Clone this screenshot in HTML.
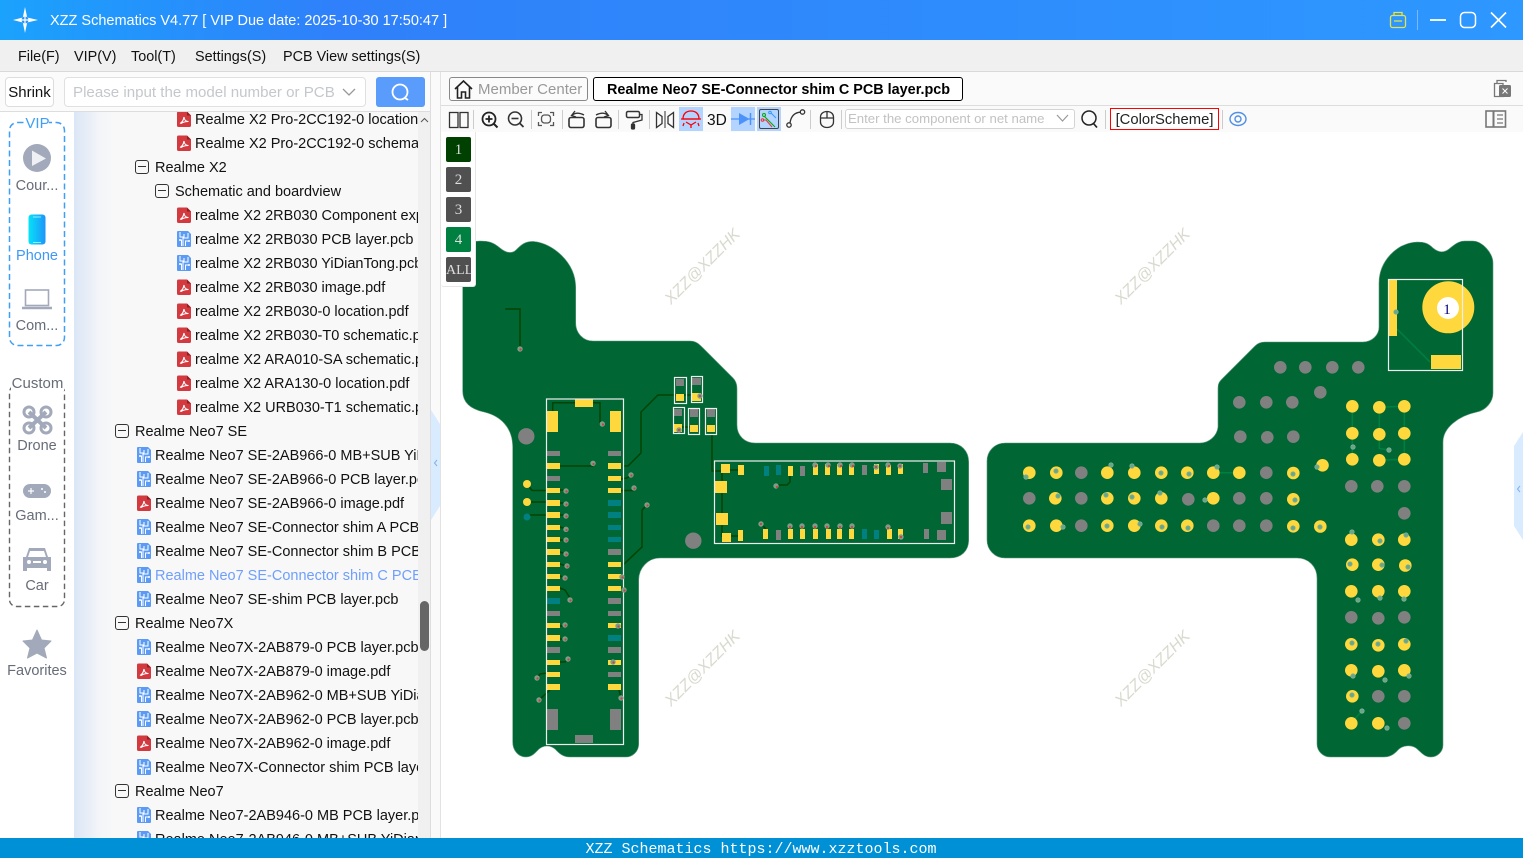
<!DOCTYPE html>
<html><head><meta charset="utf-8"><title>XZZ Schematics</title>
<style>
*{box-sizing:border-box}
html,body{margin:0;padding:0;width:1523px;height:858px;overflow:hidden;background:#fff;font-family:"Liberation Sans","Noto Sans CJK SC",sans-serif;color:#111}
.a{position:absolute}
#title{left:0;top:0;width:1523px;height:40px;background:linear-gradient(90deg,#1ba2fd 0,#2f80fa 22%,#2f88fb 50%,#2d98ff 100%);color:#fff;font-size:14.5px;line-height:42px;padding-left:50px;white-space:nowrap}
#menu{left:0;top:40px;width:1523px;height:32px;background:#f0f0f0;border-bottom:1px solid #d9d9d9;font-size:14.4px;line-height:35px}
#menu span{position:absolute;top:0;white-space:nowrap}
#sb{left:0;top:72px;width:431px;height:40px;background:#fbfbfb;border-bottom:1px solid #ddd}
#shrink{left:5px;top:5px;width:49px;height:30px;border:1px solid #ddd;border-radius:4px;background:#fff;font-size:15px;line-height:30px;text-align:center}
#inp{left:64px;top:5px;width:302px;height:30px;border:1px solid #e0e0e0;border-radius:4px;background:#fff;color:#c4c7cc;font-size:15.1px;line-height:30px;padding-left:8px;white-space:nowrap}
#btn{left:376px;top:5px;width:49px;height:30px;background:#5a9cfb;border-radius:3px}
#side{left:0;top:112px;width:74px;height:726px;background:#fff}
.sl{position:absolute;left:0;width:74px;text-align:center;font-size:14.5px;color:#666c78;white-space:nowrap;line-height:18px}
#tree{left:74px;top:112px;width:344px;height:726px;overflow:hidden;background:linear-gradient(90deg,#dbe6f6 0,#f3f5f8 26px,#f8f8f8 40px);font-size:14.5px}
#tree .in{margin-top:-5px}
.r{position:relative;height:24px;line-height:26px;white-space:nowrap}
.r svg{position:absolute;top:4px;width:14px;height:16px}
.r b{position:absolute;top:5px;width:14px;height:14px;border:1.2px solid #333;border-radius:3px;font-weight:normal}
.r b:after{content:"";position:absolute;left:2px;right:2px;top:5px;height:1.2px;background:#333}
.l3{padding-left:121px}.l3 svg{left:103px}
.l2{padding-left:81px}.l2 svg{left:63px}
.g1{padding-left:61px}.g1 b{left:41px}
.g2{padding-left:81px}.g2 b{left:61px}
.g3{padding-left:101px}.g3 b{left:81px}
#track{left:418px;top:112px;width:13px;height:726px;background:#f0f0f0}
#thumb{left:420px;top:601px;width:9px;height:50px;background:#666;border-radius:5px}
#vl1{left:430px;top:72px;width:1px;height:766px;background:#ddd}
#gut{left:431px;top:72px;width:9px;height:766px;background:#fafafa}
#vl2{left:440px;top:72px;width:1px;height:766px;background:#e2e2e2}
#tabs{left:441px;top:72px;width:1082px;height:34px;background:#fafafa;border-bottom:1px solid #ddd}
#mc{left:449px;top:77px;width:139px;height:24px;border:1px solid #888;border-radius:3px;background:#fbfbfb;color:#999;font-size:15px;line-height:24px;padding-left:28px;white-space:nowrap}
#tab{left:593px;top:77px;width:370px;height:24px;border:1px solid #000;border-radius:3px;background:#fff;color:#000;font-weight:bold;font-size:14.4px;line-height:24px;padding-left:13px;white-space:nowrap}
#tools{left:441px;top:106px;width:1082px;height:26px;background:#fafafa}
#cinp{left:845px;top:109px;width:230px;height:20px;border:1px solid #d4d4d4;border-radius:3px;background:#fff;color:#c2c2c2;font-size:13.2px;line-height:18px;padding-left:2px;white-space:nowrap;overflow:hidden}
#cs{left:1110px;top:108px;width:109px;height:22px;border:1px solid #f00;color:#222;background:#fff;font-size:14.8px;line-height:23px;text-align:center;white-space:nowrap}
#t3d{left:707px;top:111px;font-size:15.5px;line-height:20px;color:#111}
#layers{left:441px;top:132px;width:35px;height:155px;background:#fff;border-right:1px solid #e6e6e6;border-bottom:1px solid #e6e6e6;border-radius:0 0 3px 3px;z-index:3}
.lb{position:absolute;left:5px;width:25px;height:25px;border-radius:2px;color:#ddd;font:15px/27px "Liberation Serif",serif;text-align:center;overflow:hidden}
#wm text{font:italic 16px "Liberation Sans",sans-serif;fill:#d9d9cf}
#foot{left:0;top:838px;width:1523px;height:20px;background:#0090d6;color:#fff;font:normal 15px/24px "Liberation Mono",monospace;text-align:center;padding-right:1px;white-space:nowrap;z-index:5;overflow:hidden}
.y{fill:#ffd83d}.g{fill:#808080}.t{fill:#008080}
.v circle{fill:#7f9c8b}
.vr{fill:#c8453b}
.w{fill:none;stroke:#eee;stroke-width:1.2}
.tr{fill:none;stroke:#024402;stroke-width:1.5}
.tg{fill:none;stroke:#008040;stroke-width:1.5}
.q{fill:#6aa588;stroke:#7ab296;stroke-width:.8}
</style></head><body>

<svg width="0" height="0" style="position:absolute"><defs>
<symbol id="pdf" viewBox="0 0 14 16"><path d="M1.5 .5H10L14 4.5V14.500a1.500 1.500 0 0 1-1.500 1.500H1.500A1.500 1.500 0 0 1 0 14.500V2A1.500 1.500 0 0 1 1.500 .5Z" fill="#d33a40"/><path d="M10 .5V4.500H14Z" fill="#8f1f24"/><path d="M3 12.500C5 11.500 6.500 9 7 6C7.300 9 9 10.500 11.500 10.500C9 10.500 6 11 4 12.500" fill="none" stroke="#fff" stroke-width="1.100"/></symbol>
<symbol id="pcb" viewBox="0 0 14 16"><path d="M1 0H11L14 3V15a1 1 0 0 1-1 1H1a1 1 0 0 1-1-1V1a1 1 0 0 1 1-1Z" fill="#5b9bf6"/><path d="M3 1V6H7V3M11 2V7H6V15M2.500 9H4.500V15M8.500 15V10H12.500" fill="none" stroke="#fff" stroke-width="1"/><circle cx="12" cy="10" r="1" fill="#fff"/><circle cx="3" cy="9" r="1" fill="#fff"/></symbol>
</defs></svg>

<div class="a" id="title">XZZ Schematics V4.77 [ VIP Due date: 2025-10-30 17:50:47 ]</div>
<div class="a" id="menu"><span style="left:18px">File(F)</span><span style="left:74px">VIP(V)</span><span style="left:131px">Tool(T)</span><span style="left:195px">Settings(S)</span><span style="left:283px">PCB View settings(S)</span></div>

<div class="a" id="sb">
<div class="a" id="shrink">Shrink</div>
<div class="a" id="inp">Please input the model number or PCB</div>
<div class="a" id="btn"></div>
</div>

<div class="a" id="side"></div>
<div class="a sl" style="top:177px">Cour...</div>
<div class="a sl" style="top:247px;color:#3f98f5">Phone</div>
<div class="a sl" style="top:317px">Com...</div>
<div class="a sl" style="top:437px">Drone</div>
<div class="a sl" style="top:507px">Gam...</div>
<div class="a sl" style="top:577px">Car</div>
<div class="a sl" style="top:662px">Favorites</div>

<div class="a" id="tree"><div class="in">
<div class="r l3"><svg><use href="#pdf"/></svg>Realme X2 Pro-2CC192-0 location.pdf</div>
<div class="r l3"><svg><use href="#pdf"/></svg>Realme X2 Pro-2CC192-0 schematic.pdf</div>
<div class="r g2"><b></b>Realme X2</div>
<div class="r g3"><b></b>Schematic and boardview</div>
<div class="r l3"><svg><use href="#pdf"/></svg>realme X2 2RB030 Component explanation.pdf</div>
<div class="r l3"><svg><use href="#pcb"/></svg>realme X2 2RB030 PCB layer.pcb</div>
<div class="r l3"><svg><use href="#pcb"/></svg>realme X2 2RB030 YiDianTong.pcb</div>
<div class="r l3"><svg><use href="#pdf"/></svg>realme X2 2RB030 image.pdf</div>
<div class="r l3"><svg><use href="#pdf"/></svg>realme X2 2RB030-0 location.pdf</div>
<div class="r l3"><svg><use href="#pdf"/></svg>realme X2 2RB030-T0 schematic.pdf</div>
<div class="r l3"><svg><use href="#pdf"/></svg>realme X2 ARA010-SA schematic.pdf</div>
<div class="r l3"><svg><use href="#pdf"/></svg>realme X2 ARA130-0 location.pdf</div>
<div class="r l3"><svg><use href="#pdf"/></svg>realme X2 URB030-T1 schematic.pdf</div>
<div class="r g1"><b></b>Realme Neo7 SE</div>
<div class="r l2"><svg><use href="#pcb"/></svg>Realme Neo7 SE-2AB966-0 MB+SUB YiDianTong.pcb</div>
<div class="r l2"><svg><use href="#pcb"/></svg>Realme Neo7 SE-2AB966-0 PCB layer.pcb</div>
<div class="r l2"><svg><use href="#pdf"/></svg>Realme Neo7 SE-2AB966-0 image.pdf</div>
<div class="r l2"><svg><use href="#pcb"/></svg>Realme Neo7 SE-Connector shim A PCB layer.pcb</div>
<div class="r l2"><svg><use href="#pcb"/></svg>Realme Neo7 SE-Connector shim B PCB layer.pcb</div>
<div class="r l2" style="color:#6f9ffb"><svg><use href="#pcb"/></svg>Realme Neo7 SE-Connector shim C PCB layer.pcb</div>
<div class="r l2"><svg><use href="#pcb"/></svg>Realme Neo7 SE-shim PCB layer.pcb</div>
<div class="r g1"><b></b>Realme Neo7X</div>
<div class="r l2"><svg><use href="#pcb"/></svg>Realme Neo7X-2AB879-0 PCB layer.pcb</div>
<div class="r l2"><svg><use href="#pdf"/></svg>Realme Neo7X-2AB879-0 image.pdf</div>
<div class="r l2"><svg><use href="#pcb"/></svg>Realme Neo7X-2AB962-0 MB+SUB YiDianTong.pcb</div>
<div class="r l2"><svg><use href="#pcb"/></svg>Realme Neo7X-2AB962-0 PCB layer.pcb</div>
<div class="r l2"><svg><use href="#pdf"/></svg>Realme Neo7X-2AB962-0 image.pdf</div>
<div class="r l2"><svg><use href="#pcb"/></svg>Realme Neo7X-Connector shim PCB layer.pcb</div>
<div class="r g1"><b></b>Realme Neo7</div>
<div class="r l2"><svg><use href="#pcb"/></svg>Realme Neo7-2AB946-0 MB PCB layer.pcb</div>
<div class="r l2"><svg><use href="#pcb"/></svg>Realme Neo7-2AB946-0 MB+SUB YiDianTong.pcb</div>
</div></div>

<div class="a" id="track"></div><div class="a" id="thumb"></div>
<div class="a" id="vl1"></div><div class="a" id="gut"></div><div class="a" id="vl2"></div>
<div class="a" id="tabs"></div>
<div class="a" id="mc">Member Center</div>
<div class="a" id="tab">Realme Neo7 SE-Connector shim C PCB layer.pcb</div>
<div class="a" id="tools"></div>
<div class="a" id="cinp">Enter the component or net name</div>
<div class="a" id="cs">[ColorScheme]</div>
<div class="a" id="t3d">3D</div>

<svg class="a" style="left:0;top:0;z-index:2" width="1523" height="858" viewBox="0 0 1523 858">
<!-- title icons -->
<path d="M25 7L27.200 17.500L38 20L27.200 22.500L25 33L22.800 22.500L13 20L22.800 17.500Z" fill="#fff"/>
<circle cx="25" cy="20" r="3.500" fill="#2c90f8"/><path d="M21 20H29M25 16V24" stroke="#fff" stroke-width="1.200"/>
<rect x="1390.500" y="15.500" width="15" height="12" rx="2" fill="none" stroke="#e4e44a" stroke-width="1.300"/><path d="M1394 15V12.500H1402V15M1394 21H1402" fill="none" stroke="#e4e44a" stroke-width="1.300"/>
<path d="M1417.500 10V30" stroke="#7db8ff" stroke-width="1"/>
<path d="M1430 20H1446" stroke="#fff" stroke-width="1.800"/>
<rect x="1460.500" y="12.500" width="15" height="15" rx="4" fill="none" stroke="#fff" stroke-width="1.500"/>
<path d="M1491 12.500L1506 27.500M1506 12.500L1491 27.500" stroke="#fff" stroke-width="1.600"/>
<!-- search widgets -->
<path d="M343 89L349 95L355 89" fill="none" stroke="#999" stroke-width="1.300"/>
<circle cx="400" cy="92" r="7.500" fill="none" stroke="#fff" stroke-width="1.800"/><path d="M405 98L408 100" stroke="#fff" stroke-width="1.800"/>
<path d="M421 122L424.500 118.500L428 122" fill="none" stroke="#555" stroke-width="1"/>
<!-- sidebar VIP -->
<rect x="9.500" y="122.500" width="55" height="223" rx="8" fill="none" stroke="#3f9ff5" stroke-width="1.500" stroke-dasharray="6 3.500"/>
<rect x="26" y="114" width="23" height="18" fill="#fff"/>
<text x="37.500" y="128" font-size="15" fill="#3f9ff5" text-anchor="middle" font-family="Liberation Sans">VIP</text>
<circle cx="37" cy="158" r="14" fill="#a2a9ba"/><path d="M32 150.500L46 158.500L32 166Z" fill="#eef0f4"/>
<defs><linearGradient id="ph" x1="0" x2="1"><stop offset="0" stop-color="#06e2f6"/><stop offset="1" stop-color="#1e94fb"/></linearGradient></defs>
<rect x="28.500" y="214.500" width="17" height="30" rx="3" fill="url(#ph)"/><path d="M33 217H41M33 242.500H41" stroke="#bff" stroke-width=".8"/>
<rect x="25.500" y="290" width="23" height="15.500" fill="none" stroke="#a2a9ba" stroke-width="1.600"/><path d="M22 308H52" stroke="#a2a9ba" stroke-width="2.400"/>
<!-- sidebar custom -->
<rect x="9.500" y="385.500" width="55" height="221" rx="7" fill="none" stroke="#666" stroke-width="1.400" stroke-dasharray="5.500 3.500"/>
<rect x="11" y="374" width="53" height="17" fill="#fff"/>
<text x="37.500" y="388" font-size="15" fill="#666c78" text-anchor="middle" font-family="Liberation Sans">Custom</text>
<g fill="none" stroke="#a2a9ba"><circle cx="29" cy="412" r="5" stroke-width="3"/><circle cx="46" cy="412" r="5" stroke-width="3"/><circle cx="29" cy="428" r="5" stroke-width="3"/><circle cx="46" cy="428" r="5" stroke-width="3"/><path d="M29 412L46 428M46 412L29 428" stroke-width="4"/></g>
<rect x="23" y="484" width="28" height="14" rx="7" fill="#a2a9ba"/><path d="M28 491H34M31 488V494" stroke="#fff" stroke-width="1.200"/><circle cx="42" cy="489" r="1" fill="#fff"/><circle cx="45" cy="492" r="1" fill="#fff"/>
<path d="M29 548H45L48 557H51V571H47V568H27V571H23V557H26Z" fill="#a2a9ba"/><path d="M30 551H44L46 557H28Z" fill="#fff"/><circle cx="29" cy="562" r="2" fill="#fff"/><circle cx="45" cy="562" r="2" fill="#fff"/><rect x="33" y="561" width="8" height="2" fill="#fff"/>
<path d="M37 630L41.500 640L51 641L44 648L46.500 658L37 653L27.500 658L30 648L23 641L32.500 640Z" fill="#a2a9ba" stroke="#a2a9ba" stroke-linejoin="round"/>
<!-- collapse handles -->
<path d="M431 410L440 424V506L431 520Z" fill="#d9ebff"/><path d="M437 460L434.500 463L437 466" fill="none" stroke="#7fb2ec" stroke-width="1"/>
<path d="M1523 432L1514 446V526L1523 540Z" fill="#d9ebff"/><path d="M1520 486L1517.500 489L1520 492" fill="none" stroke="#7fb2ec" stroke-width="1"/>
<!-- tabs icons -->
<path d="M455 89L463.500 81L472 89M457.500 87V98H461.500V92H465.500V98H469.500V87" fill="none" stroke="#222" stroke-width="1.600"/>
<path d="M1497 83V80.500H1506V82M1494.500 83.500H1503V96.500H1494.500Z" fill="none" stroke="#777" stroke-width="1.300"/><rect x="1499" y="85" width="12" height="12" rx="1.500" fill="#777"/><path d="M1502.500 88.500L1507.500 93.500M1507.500 88.500L1502.500 93.500" stroke="#fff" stroke-width="1"/>
<!-- toolbar -->
<rect x="679" y="107" width="24" height="24" fill="#b3d4ff"/><rect x="731" y="107" width="24" height="24" fill="#b3d4ff"/><rect x="757" y="107" width="24" height="24" fill="#b3d4ff"/>
<g stroke="#ccc" stroke-width="1"><path d="M473.500 110V129M531.500 110V129M562.500 110V129M618.500 110V129M649.500 110V129M810.500 110V129M841.500 110V129M1105.500 110V129M1222.500 110V129"/></g>
<g fill="none" stroke="#333" stroke-width="1.300">
<rect x="449.500" y="112.500" width="8.500" height="15"/><rect x="460" y="112.500" width="8" height="15"/>
<circle cx="489" cy="119" r="6.500" stroke-width="1.800" stroke="#222"/><path d="M485.500 119H492.500M489 115.500V122.500" stroke-width="1.800" stroke="#222"/><path d="M494 124L497.500 127.500" stroke-width="2" stroke="#222"/>
<circle cx="515" cy="118.500" r="6.500" stroke-width="1.600"/><path d="M511.500 118.500H518.500" stroke-width="1.600"/><path d="M520 123.500L523.500 127" stroke-width="1.800"/>
<g stroke="#555"><path d="M538.500 116V112.500H542M550 112.500H553.500V116M553.500 122V125.500H550M542 125.500H538.500V122"/><rect x="541.500" y="115" width="9" height="8" rx="3"/></g>
<rect x="569" y="117.500" width="15" height="10" rx="2" stroke-width="1.600"/><path d="M572 115.500C575 112.500 579 112.500 584 115M575 111L571.500 115.500L576 117" stroke-width="1.300"/>
<rect x="596" y="117.500" width="15" height="10" rx="2" stroke-width="1.600"/><path d="M608 115.500C605 112.500 601 112.500 596 115M605 111L608.500 115.500L604 117" stroke-width="1.300"/>
<rect x="626.500" y="111.500" width="13" height="6" rx="1.500" stroke-width="1.500"/><path d="M639.500 114.500H642V120L633 122.500V125" stroke-width="1.300"/><rect x="631.500" y="124" width="3" height="5" rx="1" fill="#333"/>
<path d="M656.500 112.500L662 116.500V123.500L656.500 127.500ZM673.500 112.500L668 116.500V123.500L673.500 127.500Z"/><path d="M665 111V128" stroke-width="1"/>
<path d="M827 111.500C831 111.500 833.500 114 833.500 117V122C833.500 125 831 127.500 827 127.500C823 127.500 820.500 125 820.500 122V117C820.500 114 823 111.500 827 111.500ZM820.500 118H833.500M827 111.500V118" stroke-width="1.300"/>
<circle cx="789" cy="125" r="2.200"/><circle cx="802.500" cy="112" r="2.200"/><path d="M790 123C791 116 795 112.500 800.500 112.200"/>
<circle cx="1089" cy="118" r="7" stroke-width="1.500" stroke="#222"/><path d="M1093.500 123.500L1097 127.500" stroke-width="1.700" stroke="#222"/>
</g>
<g fill="none" stroke="#f00" stroke-width="1.300"><path d="M683 119C683 114 686 111 691 111C696 111 699 114 699 119Z"/><path d="M681 119H701M686 122L691 125L696 122M684 123L683 126M698 123L699 126M691 125V128"/></g>
<path d="M731 119H755" stroke="#4c92fb" stroke-width="1.300"/><path d="M739 113L749.500 119L739 125Z" fill="#4c92fb"/><path d="M750.500 113V125" stroke="#4c92fb" stroke-width="1.500"/>
<rect x="759.500" y="109.500" width="19" height="19" rx="1.500" fill="#b3d4ff" stroke="#444" stroke-width="1"/>
<path d="M764 116L775 127" stroke="#0a0" stroke-width="1.100" fill="none"/><circle cx="764" cy="115" r="1.500" fill="none" stroke="#0a0"/><path d="M763 120H766L772 127" stroke="#e33" fill="none"/><circle cx="762.500" cy="120" r="1.300" fill="none" stroke="#e33"/><path d="M771 113L776 118" stroke="#39f" fill="none"/><circle cx="770" cy="112.500" r="1.300" fill="none" stroke="#39f"/>
<path d="M1057 115L1062.500 121L1068 115" fill="none" stroke="#999" stroke-width="1.200"/>
<g fill="none" stroke="#4f8fe6"><ellipse cx="1238" cy="119" rx="8" ry="6.500" stroke-width="1.400"/><circle cx="1238" cy="119" r="3" stroke-width="1.400"/></g>
<rect x="1486" y="111" width="19.500" height="16" fill="none" stroke="#777" stroke-width="1.600"/><path d="M1493.500 111V127" stroke="#777" stroke-width="2"/><path d="M1497 115H1503M1497 119H1503M1497 123H1503" stroke="#777" stroke-width="1.300"/>

<!-- LEFT BOARD -->
<path fill="#006633" stroke="#5f9a7d" stroke-width=".6" d="M462.700 258C463 247 470 241 480 241C490 241 494 243 500 248C506 253 512 254 516 250C521 245 525 241 534 241.500C552 243 576 262 575.700 288V323C575.700 333 583 341 593 341H690C696 341 699 344 703 348L733 378C736 381 737 384 737 389V425C737 436 745 443 755 443H950C961 443 968.700 451 968.700 462V540C968.700 551 961 558 950 558H660C648 558 638.700 568 638.700 580V744C638.700 752 632 757 626 757H570C562 757 558 752 555 749C550 745 544 745 539 749C535 753 532 757 526 757C518 757 512.700 750 512.700 742V447C512.700 428 501 416 484 412C470 409 462.700 402 462.700 391Z"/>
<path class="tr" d="M505.300 309H520V349M623 466H628L641 453V412L658 395H700M560 466H593M552.700 411V402.700H600V424H602M527 484L532 490.500H547M527 502H547M527 517L530 515H547M621 479L627 478L631 475M621 490.500H634M560 490H566M560 503H566M560 515H566M560 527L566 529M560 540H566M560 552L566 554M560 564L567 566M560 576L565 578M560 588L565 590L570 598M560 626H565M560 639H565M560 662H565L568 659M547 673L540 674L537 678M550 690L539 700M619 690L621 698M623 565L642 547V510L647 505M682 427H690M712 435V471H721M730 470H738M722 473V537M731 536H738M790 476V482L787 485H776M761 524L766 529"/>
<g class="y">
<rect x="575" y="399" width="18" height="8"/><rect x="547" y="411" width="11" height="21"/><rect x="610" y="411" width="11" height="21"/>
<rect x="547" y="463" width="13" height="6"/><rect x="547" y="488" width="13" height="5"/><rect x="547" y="500" width="13" height="6"/><rect x="547" y="512" width="13" height="6"/><rect x="547" y="525" width="13" height="5"/><rect x="547" y="537" width="13" height="5"/><rect x="547" y="549" width="13" height="6"/><rect x="547" y="562" width="13" height="5"/><rect x="547" y="574" width="13" height="5"/><rect x="547" y="586" width="13" height="5"/><rect x="547" y="623" width="13" height="5"/><rect x="547" y="635" width="13" height="6"/><rect x="547" y="660" width="13" height="5"/><rect x="547" y="672" width="13" height="5"/><rect x="547" y="684" width="13" height="6"/>
<rect x="608" y="463" width="13" height="6"/><rect x="608" y="476" width="13" height="5"/><rect x="608" y="488" width="13" height="5"/><rect x="608" y="562" width="13" height="5"/><rect x="608" y="574" width="13" height="5"/><rect x="608" y="586" width="13" height="5"/><rect x="608" y="623" width="13" height="5"/><rect x="608" y="660" width="13" height="5"/><rect x="608" y="684" width="13" height="6"/>
<circle cx="527" cy="484" r="4"/><circle cx="527" cy="502" r="4"/>
<rect x="676" y="394" width="8" height="7"/><rect x="692" y="393" width="9" height="8"/><rect x="674" y="424" width="8" height="8"/><rect x="690" y="425" width="8" height="7"/><rect x="707" y="425" width="8" height="7"/>
<rect x="721" y="464" width="9" height="9"/><rect x="738" y="465" width="6" height="10"/><rect x="715" y="481" width="12" height="12"/><rect x="716" y="513" width="12" height="12"/><rect x="722" y="533" width="9" height="9"/><rect x="738" y="530" width="5" height="11"/>
<rect x="788" y="466" width="5" height="10"/><rect x="813" y="464" width="5" height="11"/><rect x="825" y="464" width="5" height="11"/><rect x="837" y="464" width="5" height="11"/><rect x="849" y="464" width="5" height="11"/><rect x="874" y="464" width="5" height="10"/><rect x="886" y="465" width="5" height="10"/><rect x="898" y="464" width="5" height="10"/>
<rect x="763" y="529" width="5" height="10"/><rect x="788" y="529" width="5" height="10"/><rect x="800" y="529" width="5" height="10"/><rect x="813" y="529" width="5" height="10"/><rect x="826" y="529" width="5" height="10"/><rect x="837" y="529" width="5" height="10"/><rect x="849" y="529" width="5" height="10"/><rect x="887" y="529" width="5" height="10"/><rect x="898" y="529" width="5" height="10"/>
</g>
<g class="g">
<circle cx="526.300" cy="436.300" r="8.200"/><circle cx="693.300" cy="540.700" r="8.200"/>
<rect x="547" y="451" width="13" height="5"/><rect x="547" y="476" width="13" height="5"/><rect x="547" y="611" width="13" height="5"/><rect x="547" y="647" width="13" height="6"/><rect x="547" y="709" width="11" height="21"/><rect x="610" y="709" width="11" height="21"/><rect x="575" y="735" width="18" height="8"/>
<rect x="608" y="451" width="13" height="5"/><rect x="608" y="549" width="13" height="6"/><rect x="608" y="598" width="13" height="6"/><rect x="608" y="611" width="13" height="5"/><rect x="608" y="647" width="13" height="6"/><rect x="608" y="672" width="13" height="5"/>
<rect x="676" y="379" width="8" height="7"/><rect x="692" y="378" width="9" height="7"/><rect x="674" y="409" width="8" height="7"/><rect x="690" y="409" width="8" height="8"/><rect x="707" y="409" width="8" height="8"/>
<rect x="800" y="466" width="5" height="10"/><rect x="862" y="465" width="5" height="10"/><rect x="923" y="463" width="5" height="10"/><rect x="937" y="462" width="9" height="10"/><rect x="941" y="479" width="11" height="11"/><rect x="941" y="512" width="11" height="12"/><rect x="937" y="530" width="9" height="10"/><rect x="924" y="529" width="5" height="10"/><rect x="776" y="530" width="5" height="10"/>
</g>
<g class="t">
<rect x="547" y="598" width="13" height="6"/><rect x="608" y="500" width="13" height="6"/><rect x="608" y="512" width="13" height="6"/><rect x="608" y="525" width="13" height="5"/><rect x="608" y="537" width="13" height="5"/><rect x="608" y="635" width="13" height="6"/>
<circle cx="527" cy="517" r="3.500"/><rect x="764" y="466" width="5" height="10"/><rect x="776" y="465" width="5" height="10"/><rect x="862" y="529" width="5" height="10"/><rect x="874" y="530" width="5" height="9"/>
</g>
<g class="w">
<rect x="546.500" y="399" width="77" height="345.500"/><rect x="674.500" y="377.500" width="12" height="26"/><rect x="691.500" y="376.500" width="11" height="26"/><rect x="673.500" y="407.500" width="11" height="26"/><rect x="688.500" y="408.500" width="11" height="26"/><rect x="705.500" y="408.500" width="11" height="26"/><rect x="714.500" y="461" width="240" height="82.500"/>
</g>
<g class="v">
<circle cx="520" cy="349" r="2.700"/><circle cx="602.300" cy="424" r="2.700"/><circle cx="593" cy="463.300" r="2.700"/><circle cx="631" cy="475" r="2.700"/><circle cx="634" cy="488" r="2.700"/><circle cx="566" cy="491" r="2.700"/><circle cx="566" cy="504" r="2.700"/><circle cx="647" cy="505" r="2.700"/><circle cx="566" cy="516" r="2.700"/><circle cx="566" cy="529.300" r="2.700"/><circle cx="566" cy="540" r="2.700"/><circle cx="566" cy="554" r="2.700"/><circle cx="567" cy="566" r="2.700"/><circle cx="565" cy="578" r="2.700"/><circle cx="570" cy="600" r="2.700"/><circle cx="565" cy="625" r="2.700"/><circle cx="565" cy="639" r="2.700"/><circle cx="568" cy="659" r="2.700"/><circle cx="537" cy="678" r="2.700"/><circle cx="539" cy="700" r="2.700"/><circle cx="622" cy="577" r="2.700"/><circle cx="624" cy="590" r="2.700"/><circle cx="618" cy="626" r="2.700"/><circle cx="613" cy="662" r="2.700"/><circle cx="621" cy="698" r="2.700"/><circle cx="700" cy="396" r="2.700"/><circle cx="679" cy="430" r="2.700"/><circle cx="815" cy="465" r="2.700"/><circle cx="828" cy="465" r="2.700"/><circle cx="840" cy="465" r="2.700"/><circle cx="852" cy="465" r="2.700"/><circle cx="876" cy="467" r="2.700"/><circle cx="888" cy="465" r="2.700"/><circle cx="900" cy="466" r="2.700"/><circle cx="776" cy="486" r="2.700"/><circle cx="761" cy="524" r="2.700"/><circle cx="790" cy="526" r="2.700"/><circle cx="802" cy="526" r="2.700"/><circle cx="815" cy="526" r="2.700"/><circle cx="827" cy="526" r="2.700"/><circle cx="840" cy="526" r="2.700"/><circle cx="852" cy="526" r="2.700"/><circle cx="888" cy="527" r="2.700"/><circle cx="901" cy="537" r="2.700"/>
</g>
<g class="vr">
<circle cx="520.500" cy="349.500" r="1.100"/><circle cx="603" cy="424.500" r="1.100"/><circle cx="593.500" cy="464" r="1.100"/><circle cx="631.500" cy="475.500" r="1.100"/><circle cx="634.500" cy="488.500" r="1.100"/><circle cx="566.500" cy="491.500" r="1.100"/><circle cx="566.500" cy="504.500" r="1.100"/><circle cx="647.500" cy="505.500" r="1.100"/><circle cx="566.500" cy="516.500" r="1.100"/><circle cx="566.500" cy="530" r="1.100"/><circle cx="566.500" cy="540.500" r="1.100"/><circle cx="566.500" cy="554.500" r="1.100"/><circle cx="567.500" cy="566.500" r="1.100"/><circle cx="565.500" cy="578.500" r="1.100"/><circle cx="570.500" cy="600.500" r="1.100"/><circle cx="565.500" cy="625.500" r="1.100"/><circle cx="565.500" cy="639.500" r="1.100"/><circle cx="568.500" cy="659.500" r="1.100"/><circle cx="537.500" cy="678.500" r="1.100"/><circle cx="539.500" cy="700.500" r="1.100"/><circle cx="622.500" cy="577.500" r="1.100"/><circle cx="624.500" cy="590.500" r="1.100"/><circle cx="618.500" cy="626.500" r="1.100"/><circle cx="613.500" cy="662.500" r="1.100"/><circle cx="621.500" cy="698.500" r="1.100"/><circle cx="700" cy="396" r="1.100"/><circle cx="679" cy="430" r="1.100"/><circle cx="816" cy="466" r="1.100"/><circle cx="829" cy="466" r="1.100"/><circle cx="841" cy="466" r="1.100"/><circle cx="853" cy="466" r="1.100"/><circle cx="876" cy="467" r="1.100"/><circle cx="889" cy="466" r="1.100"/><circle cx="900" cy="466" r="1.100"/><circle cx="777" cy="487" r="1.100"/><circle cx="761" cy="524" r="1.100"/><circle cx="790" cy="527" r="1.100"/><circle cx="802" cy="527" r="1.100"/><circle cx="815" cy="527" r="1.100"/><circle cx="827" cy="527" r="1.100"/><circle cx="840" cy="527" r="1.100"/><circle cx="852" cy="527" r="1.100"/><circle cx="888" cy="528" r="1.100"/><circle cx="901" cy="537" r="1.100"/>
</g>

<!-- RIGHT BOARD -->
<path fill="#006633" stroke="#5f9a7d" stroke-width=".6" d="M1005 443H1200C1209 443 1217 436 1218 427V388C1218 384 1219 382 1222 379L1255 346C1258 343 1261 342 1265 342H1363C1372 342 1379 335 1379 327V283C1379 262 1396 243 1417 242C1424 242 1428 243 1433 248C1439 253 1444 253 1449 249C1455 244 1459 241 1465 241H1473C1482 241 1493 253 1493 263V393C1493 402 1486 410 1477 412C1458 416 1443 428 1443 442V745C1443 752 1437 757 1431 757C1424 757 1421 752 1416 748C1411 745 1404 745 1399 749C1396 752 1392 757 1384 757H1330C1323 757 1317 751 1317 744V578C1317 567 1309 558 1297 558H1005C995 558 987 550 987 540V461C987 451 995 443 1005 443Z"/>
<path class="tg" d="M1213 472.700H1239M1352.300 406.300V459.300M1379.300 407.300V448.500L1389 450M1379.300 407.300L1404.300 406.300V459.300M1379.300 460.300L1404.300 459.300M1397 329L1430 362M1351 723L1362 711"/>
<g class="y">
<circle cx="1029.300" cy="472.700" r="6.300"/><circle cx="1056.300" cy="472.700" r="6.300"/><circle cx="1107.300" cy="472.700" r="6.300"/><circle cx="1134.300" cy="472.700" r="6.300"/><circle cx="1161.300" cy="472.700" r="6.300"/><circle cx="1187.300" cy="472.700" r="6.300"/><circle cx="1213.300" cy="472.700" r="6.300"/><circle cx="1239.300" cy="472.700" r="6.300"/><circle cx="1293.300" cy="473" r="6.300"/><circle cx="1322.500" cy="465.300" r="6.300"/>
<circle cx="1055.300" cy="498.300" r="6.300"/><circle cx="1107.300" cy="498.300" r="6.300"/><circle cx="1134.300" cy="498.300" r="6.300"/><circle cx="1161.300" cy="498.300" r="6.300"/><circle cx="1213.300" cy="498.300" r="6.300"/><circle cx="1293.300" cy="499.300" r="6.300"/>
<circle cx="1029.300" cy="525.700" r="6.300"/><circle cx="1056.300" cy="525.700" r="6.300"/><circle cx="1107.300" cy="525.700" r="6.300"/><circle cx="1134.300" cy="525.700" r="6.300"/><circle cx="1161.300" cy="525.700" r="6.300"/><circle cx="1187.300" cy="525.700" r="6.300"/><circle cx="1293.300" cy="526.300" r="6.300"/><circle cx="1320.300" cy="526.500" r="6.300"/>
<circle cx="1448.300" cy="307.300" r="26"/><rect x="1389" y="280" width="8" height="56"/><rect x="1431" y="355" width="30" height="14"/>
<circle cx="1352.300" cy="406.300" r="6.300"/><circle cx="1379.300" cy="407.300" r="6.300"/><circle cx="1404.300" cy="406.300" r="6.300"/><circle cx="1352.300" cy="433.300" r="6.300"/><circle cx="1379.300" cy="434.300" r="6.300"/><circle cx="1404.300" cy="433.300" r="6.300"/><circle cx="1352.300" cy="459.300" r="6.300"/><circle cx="1379.300" cy="460.300" r="6.300"/><circle cx="1404.300" cy="459.300" r="6.300"/>
<circle cx="1351.300" cy="539.700" r="6.300"/><circle cx="1378.300" cy="539.700" r="6.300"/><circle cx="1404.300" cy="539.700" r="6.300"/><circle cx="1352.300" cy="564.700" r="6.300"/><circle cx="1378.300" cy="564.700" r="6.300"/><circle cx="1405.300" cy="565.500" r="6.300"/><circle cx="1351.300" cy="591.300" r="6.300"/><circle cx="1378.300" cy="591.300" r="6.300"/><circle cx="1404.300" cy="591.300" r="6.300"/><circle cx="1351.300" cy="644.300" r="6.300"/><circle cx="1378.300" cy="645.300" r="6.300"/><circle cx="1404.300" cy="644.300" r="6.300"/><circle cx="1351.300" cy="670.300" r="6.300"/><circle cx="1378.300" cy="671.300" r="6.300"/><circle cx="1404.300" cy="670.300" r="6.300"/><circle cx="1352.300" cy="696.300" r="6.300"/><circle cx="1351.300" cy="723.300" r="6.300"/><circle cx="1378.300" cy="723.300" r="6.300"/>
</g>
<g class="g">
<circle cx="1081.300" cy="472.700" r="6.300"/><circle cx="1266.300" cy="472.700" r="6.300"/><circle cx="1029.300" cy="498.300" r="6.300"/><circle cx="1081.300" cy="498.300" r="6.300"/><circle cx="1188.300" cy="499.300" r="6.300"/><circle cx="1239.300" cy="498.300" r="6.300"/><circle cx="1266.300" cy="498.300" r="6.300"/><circle cx="1081.300" cy="525.700" r="6.300"/><circle cx="1213.300" cy="525.700" r="6.300"/><circle cx="1239.300" cy="525.700" r="6.300"/><circle cx="1266.300" cy="525.700" r="6.300"/>
<circle cx="1280.300" cy="367.300" r="6.300"/><circle cx="1305.300" cy="367.300" r="6.300"/><circle cx="1332.300" cy="367.300" r="6.300"/><circle cx="1358.300" cy="367.300" r="6.300"/><circle cx="1320.300" cy="392.300" r="6.300"/><circle cx="1239.300" cy="402.300" r="6.300"/><circle cx="1266.300" cy="402.300" r="6.300"/><circle cx="1292.300" cy="402.300" r="6.300"/><circle cx="1240.300" cy="436.700" r="6.300"/><circle cx="1267.300" cy="437.300" r="6.300"/><circle cx="1293.300" cy="436.700" r="6.300"/>
<circle cx="1351.300" cy="486.300" r="6.300"/><circle cx="1377.300" cy="486.300" r="6.300"/><circle cx="1404.300" cy="486.300" r="6.300"/><circle cx="1404.300" cy="513.300" r="6.300"/><circle cx="1351.300" cy="617.300" r="6.300"/><circle cx="1378.300" cy="618.300" r="6.300"/><circle cx="1404.300" cy="617.300" r="6.300"/><circle cx="1378.300" cy="696.300" r="6.300"/><circle cx="1404.300" cy="696.300" r="6.300"/><circle cx="1404.300" cy="723.300" r="6.300"/>
</g>
<circle cx="1448" cy="308" r="11" fill="#fff"/>
<text x="1447" y="314" font-family="Liberation Serif" font-size="15" fill="#000080" text-anchor="middle">1</text>
<rect x="1388.500" y="279.500" width="74" height="91" class="w"/>
<g class="q">
<circle cx="1026" cy="477" r="2.200"/><circle cx="1056" cy="471" r="2.200"/><circle cx="1111" cy="465" r="2.200"/><circle cx="1132" cy="466" r="2.200"/><circle cx="1161" cy="473" r="2.200"/><circle cx="1189" cy="474" r="2.200"/><circle cx="1217" cy="467" r="2.200"/><circle cx="1293" cy="474" r="2.200"/><circle cx="1317" cy="467" r="2.200"/><circle cx="1058" cy="496" r="2.200"/><circle cx="1106" cy="495" r="2.200"/><circle cx="1132" cy="497" r="2.200"/><circle cx="1160" cy="493" r="2.200"/><circle cx="1205" cy="500" r="2.200"/><circle cx="1295" cy="500" r="2.200"/><circle cx="1028" cy="527" r="2.200"/><circle cx="1063" cy="527" r="2.200"/><circle cx="1107" cy="526" r="2.200"/><circle cx="1140" cy="524" r="2.200"/><circle cx="1162" cy="527" r="2.200"/><circle cx="1188" cy="528" r="2.200"/><circle cx="1293" cy="528" r="2.200"/><circle cx="1320" cy="527" r="2.200"/>
<circle cx="1396" cy="312" r="2.200"/><circle cx="1353" cy="447" r="2.200"/><circle cx="1389" cy="450" r="2.200"/>
<circle cx="1352" cy="532" r="2.200"/><circle cx="1380" cy="541" r="2.200"/><circle cx="1406" cy="535" r="2.200"/><circle cx="1350" cy="564" r="2.200"/><circle cx="1382" cy="565" r="2.200"/><circle cx="1408" cy="567" r="2.200"/><circle cx="1358" cy="600" r="2.200"/><circle cx="1380" cy="598" r="2.200"/><circle cx="1404" cy="599" r="2.200"/><circle cx="1352" cy="643" r="2.200"/><circle cx="1378" cy="644" r="2.200"/><circle cx="1406" cy="641" r="2.200"/><circle cx="1353" cy="676" r="2.200"/><circle cx="1385" cy="680" r="2.200"/><circle cx="1409" cy="676" r="2.200"/><circle cx="1352" cy="695" r="2.200"/><circle cx="1362" cy="711" r="2.200"/><circle cx="1387" cy="728" r="2.200"/>
</g>
<g id="wm">
<text transform="translate(671 305) rotate(-45)">XZZ@XZZHK</text>
<text transform="translate(1121 305) rotate(-45)">XZZ@XZZHK</text>
<text transform="translate(671 707) rotate(-45)">XZZ@XZZHK</text>
<text transform="translate(1121 707) rotate(-45)">XZZ@XZZHK</text>
</g>
</svg>

<div class="a" id="layers">
<div class="lb" style="top:5px;background:#004000">1</div>
<div class="lb" style="top:35px;background:#505050">2</div>
<div class="lb" style="top:65px;background:#505050">3</div>
<div class="lb" style="top:95px;background:#008040">4</div>
<div class="lb" style="top:125px;background:#505050;font-size:14px">ALL</div>
</div>

<div class="a" id="foot">XZZ Schematics https://www.xzztools.com</div>
</body></html>
